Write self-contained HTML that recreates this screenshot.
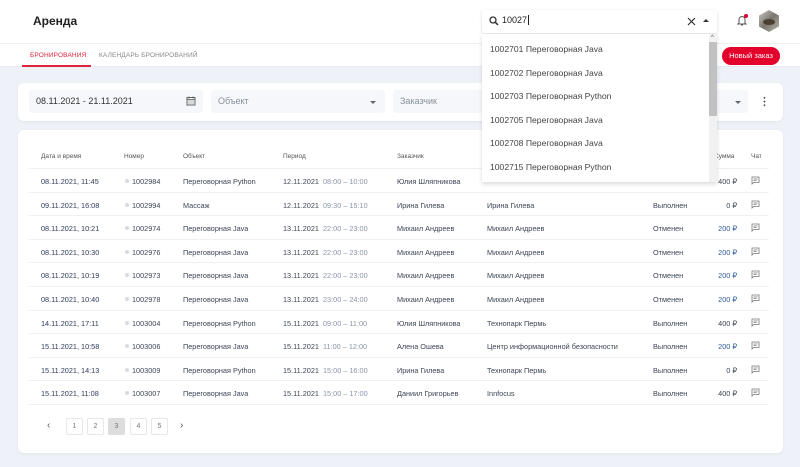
<!DOCTYPE html>
<html><head><meta charset="utf-8"><style>
*{box-sizing:border-box;margin:0;padding:0}
body{width:800px;height:467px;background:#eef2f8;font-family:"Liberation Sans",sans-serif;position:relative;overflow:hidden;color:#3a4250}
.a{position:absolute;white-space:nowrap}
.hdr{position:absolute;left:0;top:0;width:800px;height:67px;background:#fff;border-bottom:1px solid #e6eaf0}
.card{position:absolute;background:#fff;border-radius:6px;box-shadow:0 1px 3px rgba(0,0,0,.05)}
.inp{position:absolute;top:90px;height:23px;background:#f5f7fb;border-radius:3px;font-size:9px;color:#8a909a;padding:6px 7px}
.row{position:absolute;left:29px;width:740px;height:23.5px;border-bottom:1px solid #edf0f4;font-size:7.3px;color:#3d4555}
.row span{position:absolute;top:8px}
.tri{width:0;height:0;border-left:3px solid transparent;border-right:3px solid transparent;border-top:3px solid #666;position:absolute}
.pg{position:absolute;top:418px;width:17px;height:17px;border:1px solid #e5e8ec;border-radius:2px;font-size:7px;color:#777;text-align:center;line-height:15px}
.dd{font-size:8.6px;color:#444;left:490px}
</style></head><body>
<div class="hdr"></div>
<div style="position:absolute;left:0;top:43px;width:800px;height:1px;background:#eef0f3"></div>
<div class="a" style="left:33px;top:14px;font-size:12px;font-weight:bold;color:#222">Аренда</div>
<div class="a" style="left:30px;top:52px;font-size:6.5px;letter-spacing:.15px;color:#e0243c">БРОНИРОВАНИЯ</div>
<div style="position:absolute;left:22px;top:65px;width:69px;height:2px;background:#e0243c"></div>
<div class="a" style="left:99px;top:52px;font-size:6.5px;letter-spacing:.15px;color:#888">КАЛЕНДАРЬ БРОНИРОВАНИЙ</div>
<div class="a" style="left:722px;top:47px;width:58px;height:18px;border-radius:9px;background:#e3002b;color:#fff;font-size:7.5px;text-align:center;line-height:18px">Новый заказ</div>
<svg class="a" style="left:735px;top:13px" width="14" height="14" viewBox="0 0 14 14"><path d="M4 10V6.5a3 3 0 0 1 6 0V10l1 1H3z M6 12h2" fill="none" stroke="#555" stroke-width="1"/><circle cx="11" cy="3" r="2" fill="#e3002b"/></svg>
<svg class="a" style="left:757px;top:9px" width="24" height="24" viewBox="0 0 24 24"><defs><linearGradient id="g" x1="0" y1="0" x2="1" y2="1"><stop offset="0" stop-color="#c9c9c4"/><stop offset=".5" stop-color="#7b766d"/><stop offset="1" stop-color="#b8b5ae"/></linearGradient></defs><polygon points="12,1 22,6.5 22,17.5 12,23 2,17.5 2,6.5" fill="url(#g)"/><ellipse cx="12" cy="13" rx="6" ry="3" fill="#4a3f33"/></svg>

<div class="card" style="left:18px;top:83px;width:765px;height:38px"></div>
<div class="inp" style="left:29px;width:174px;color:#333">08.11.2021 - 21.11.2021</div>
<svg class="a" style="left:186px;top:96px" width="10" height="10" viewBox="0 0 10 10"><rect x="1" y="1.5" width="8" height="7.5" fill="none" stroke="#555" stroke-width=".9"/><path d="M1 3.5h8M3 .5v2M7 .5v2M2.5 5h1M4.5 5h1M6.5 5h1M2.5 7h1M4.5 7h1M6.5 7h1" stroke="#555" stroke-width=".8"/></svg>
<div class="inp" style="left:211px;width:174px">Объект</div><div class="tri" style="left:370px;top:101px"></div>
<div class="inp" style="left:393px;width:355px">Заказчик</div><div class="tri" style="left:735px;top:101px"></div>
<div class="a" style="left:763px;top:96px;width:3px;height:11px;background:radial-gradient(circle,#555 .8px,transparent 1px) 0 0/3px 3.7px"></div>

<div class="card" style="left:18px;top:130px;width:765px;height:323px"></div>
<div class="row" style="top:145px;height:24px;font-size:6.5px;color:#555">
<span style="left:12px;top:8px">Дата и время</span><span style="left:95px;top:8px">Номер</span><span style="left:154px;top:8px">Объект</span><span style="left:254px;top:8px">Период</span><span style="left:368px;top:8px">Заказчик</span><span style="left:685px;top:8px">Сумма</span><span style="left:722px;top:8px">Чат</span></div>
<div id="rows"></div>
<script>
var d=[["08.11.2021, 11:45","1002984","Переговорная Python","12.11.2021","08:00 – 10:00","Юлия Шляпникова","","","400 ₽"],
["09.11.2021, 16:08","1002994","Массаж","12.11.2021","09:30 – 15:10","Ирина Гилева","Ирина Гилева","Выполнен","0 ₽"],
["08.11.2021, 10:21","1002974","Переговорная Java","13.11.2021","22:00 – 23:00","Михаил Андреев","Михаил Андреев","Отменен","200 ₽"],
["08.11.2021, 10:30","1002976","Переговорная Java","13.11.2021","22:00 – 23:00","Михаил Андреев","Михаил Андреев","Отменен","200 ₽"],
["08.11.2021, 10:19","1002973","Переговорная Java","13.11.2021","22:00 – 23:00","Михаил Андреев","Михаил Андреев","Отменен","200 ₽"],
["08.11.2021, 10:40","1002978","Переговорная Java","13.11.2021","23:00 – 24:00","Михаил Андреев","Михаил Андреев","Отменен","200 ₽"],
["14.11.2021, 17:11","1003004","Переговорная Python","15.11.2021","09:00 – 11:00","Юлия Шляпникова","Технопарк Пермь","Выполнен","400 ₽"],
["15.11.2021, 10:58","1003006","Переговорная Java","15.11.2021","11:00 – 12:00","Алена Ошева","Центр информационной безопасности","Выполнен","200 ₽"],
["15.11.2021, 14:13","1003009","Переговорная Python","15.11.2021","15:00 – 16:00","Ирина Гилева","Технопарк Пермь","Выполнен","0 ₽"],
["15.11.2021, 11:08","1003007","Переговорная Java","15.11.2021","15:00 – 17:00","Даниил Григорьев","Innfocus","Выполнен","400 ₽"]];
var h="";
d.forEach(function(r,i){var t=169+i*23.6;var blue=r[8]=="200 ₽"?"#2f5b9a":"#3d4555";
h+='<div class="row" style="top:'+t+'px"><span style="left:12px;color:#2d3a58">'+r[0]+'</span><span style="left:96px;top:10px;width:4px;height:4px;border-radius:2px;background:#d8dbe0"></span><span style="left:103px">'+r[1]+'</span><span style="left:154px">'+r[2]+'</span><span style="left:254px">'+r[3]+'</span><span style="left:294px;color:#8a95a8">'+r[4]+'</span><span style="left:368px">'+r[5]+'</span><span style="left:458px">'+r[6]+'</span><span style="left:624px">'+r[7]+'</span><span style="right:32px;color:'+blue+'">'+r[8]+'</span><svg style="position:absolute;left:722px;top:7px" width="9" height="9" viewBox="0 0 9 9"><path d="M1 1h7v5.5H2.5L1 8z M2.5 3h4M2.5 4.6h3" fill="none" stroke="#777" stroke-width=".8"/></svg></div>';});
document.getElementById("rows").innerHTML=h;
</script>
<div class="a" style="left:47px;top:420px;font-size:10px;color:#555">‹</div>
<div class="pg" style="left:66px">1</div><div class="pg" style="left:87px">2</div><div class="pg" style="left:108px;background:#ddd;border-color:#ddd">3</div><div class="pg" style="left:130px">4</div><div class="pg" style="left:151px">5</div>
<div class="a" style="left:180px;top:420px;font-size:10px;color:#555">›</div>

<div class="a" style="left:482px;top:10px;width:235px;height:23px;background:#fff;box-shadow:0 1px 3px rgba(0,0,0,.15);border-radius:2px"></div>
<svg class="a" style="left:489px;top:16px" width="10" height="10" viewBox="0 0 10 10"><circle cx="4" cy="4" r="3" fill="none" stroke="#333" stroke-width="1.3"/><path d="M6.2 6.2 9 9" stroke="#333" stroke-width="1.5"/></svg>
<div class="a" style="left:502px;top:15px;font-size:9px;color:#222">10027<span style="border-left:1px solid #222;margin-left:1px"></span></div>
<svg class="a" style="left:687px;top:17px" width="9" height="9" viewBox="0 0 9 9"><path d="M1 1 8 8M8 1 1 8" stroke="#333" stroke-width="1.2"/></svg>
<div class="a" style="left:703px;top:19px;width:0;height:0;border-left:3px solid transparent;border-right:3px solid transparent;border-bottom:3px solid #333"></div>
<div class="a" style="left:482px;top:34px;width:235px;height:148px;background:#fff;box-shadow:0 2px 4px rgba(0,0,0,.15)"></div>
<div class="a" style="left:709px;top:34px;width:8px;height:148px;background:#f1f1f1"></div>
<div class="a" style="left:709px;top:42px;width:8px;height:74px;background:#c1c1c1"></div>
<div class="a" style="left:711px;top:35px;font-size:6px;color:#555">^</div>
<div class="a dd" style="top:44px">1002701 Переговорная Java</div>
<div class="a dd" style="top:68px">1002702 Переговорная Java</div>
<div class="a dd" style="top:91px">1002703 Переговорная Python</div>
<div class="a dd" style="top:115px">1002705 Переговорная Java</div>
<div class="a dd" style="top:138px">1002708 Переговорная Java</div>
<div class="a dd" style="top:162px">1002715 Переговорная Python</div>
</body></html>
